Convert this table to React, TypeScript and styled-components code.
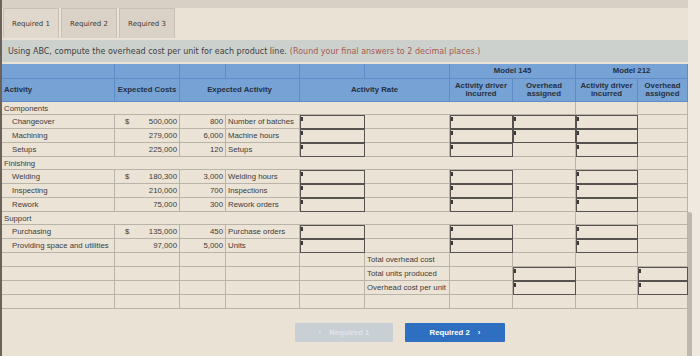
import React from "react";
import styled, { createGlobalStyle, css } from "styled-components";

const GlobalStyle = createGlobalStyle`
  html, body { margin: 0; padding: 0; }
  body { background: #eae2d5; font-family: "Liberation Sans", Arial, sans-serif; }
`;

const COLS = "113px 65px 46px 74px 65px 85px 63px 63px 62px 50px";

const Page = styled.div`
  width: 700px;
  height: 356px;
  display: flex;
  overflow: hidden;
  background: #eae2d5;
`;

const Main = styled.div`
  width: 688px;
  display: flex;
  flex-direction: column;
  border-left: 2px solid #6b6259;
  box-sizing: border-box;
`;

const RightStrip = styled.div`
  width: 12px;
  background: #efe9df;
  display: flex;
  flex-direction: column;
  padding-top: 212px;
  box-sizing: border-box;
`;

const ScrollThumb = styled.div`
  flex: 1;
  width: 5px;
  margin-left: -1px;
  border-radius: 3px 3px 0 0;
  background: #bdb7ae;
`;

const TopStrip = styled.div`
  height: 8px;
  background: #d8d0c4;
`;

const Tabs = styled.div`
  display: flex;
  gap: 2px;
  height: 30px;
  padding-left: 1px;
`;

const Tab = styled.div<{ $active?: boolean }>`
  width: 56px;
  box-sizing: border-box;
  display: flex;
  align-items: center;
  justify-content: center;
  font-family: "DejaVu Sans", Verdana, sans-serif;
  font-size: 7px;
  color: #3d3a36;
  background: ${(p) => (p.$active ? "#e0d8cc" : "#dad2c6")};
  border: 1px solid #c8c0b4;
  border-bottom: none;
`;

const InfoBar = styled.div`
  margin-top: 2px;
  height: 22px;
  display: flex;
  align-items: center;
  padding-left: 6px;
  background: #ccd1cd;
  font-family: "DejaVu Sans", Verdana, sans-serif;
  font-size: 8px;
  color: #3f3f3f;
  white-space: nowrap;
`;

const Hint = styled.span`
  color: #a85a4c;
  margin-left: 3px;
`;

const Table = styled.div`
  margin-top: 2px;
  display: flex;
  flex-direction: column;
`;

const HeadRow = styled.div<{ $h: number }>`
  display: grid;
  grid-template-columns: ${COLS};
  height: ${(p) => p.$h}px;
  background: #76a2d6;
`;

const HeadCell = styled.div<{ $span?: number; $align?: string }>`
  grid-column: span ${(p) => p.$span ?? 1};
  display: flex;
  align-items: center;
  justify-content: ${(p) => p.$align ?? "center"};
  text-align: center;
  padding: 0 2px;
  box-sizing: border-box;
  border-right: 1px solid #5d8cc6;
  border-bottom: 1px solid #5d8cc6;
  font-weight: bold;
  font-size: 7.8px;
  line-height: 8.5px;
  color: #26303f;
  white-space: nowrap;
`;

const HeadLines = styled.span`
  white-space: normal;
`;

const BodyRow = styled.div<{ $h: number }>`
  display: grid;
  grid-template-columns: ${COLS};
  height: ${(p) => p.$h}px;
  background: #ebe3d6;
`;

const Cell = styled.div<{ $span?: number; $align?: string; $pad?: number; $input?: boolean }>`
  grid-column: span ${(p) => p.$span ?? 1};
  position: relative;
  display: flex;
  align-items: center;
  justify-content: ${(p) => p.$align ?? "flex-start"};
  padding: 0 ${(p) => (p.$align === "flex-end" ? 2 : 0)}px 0 ${(p) => p.$pad ?? 3}px;
  box-sizing: border-box;
  border-right: 1px solid #bab3a8;
  border-bottom: 1px solid #bab3a8;
  font-size: 7.8px;
  color: #3b3b3b;
  white-space: nowrap;
  ${(p) =>
    p.$input &&
    css`
      border-right-color: #555250;
      border-bottom-color: #555250;
      box-shadow: inset 1px 1px 0 #555250;
      &::before {
        content: "";
        position: absolute;
        left: 1px;
        top: 2px;
        width: 2px;
        height: 4px;
        background: #3a3a3a;
      }
    `}
`;

const CostCell = styled(Cell)`
  justify-content: space-between;
  padding: 0 2px 0 10px;
`;

const NavRow = styled.div`
  display: flex;
  gap: 12px;
  margin-top: 14px;
  padding-left: 293px;
`;

const NavButton = styled.div<{ $primary?: boolean }>`
  width: ${(p) => (p.$primary ? 100 : 98)}px;
  height: 19px;
  display: flex;
  align-items: center;
  justify-content: center;
  gap: 8px;
  font-size: 7.8px;
  font-weight: bold;
  color: ${(p) => (p.$primary ? "#ffffff" : "#dfe5ea")};
  background: ${(p) => (p.$primary ? "#2f6fc2" : "#c8cfd5")};
  border-radius: 1px;
`;

type DataRow = {
  name: string;
  dollar?: boolean;
  cost: string;
  qty: string;
  unit: string;
  oh145?: boolean;
};

type Group = { title: string; rows: DataRow[] };

const groups: Group[] = [
  {
    title: "Components",
    rows: [
      { name: "Changeover", dollar: true, cost: "500,000", qty: "800", unit: "Number of batches", oh145: true },
      { name: "Machining", cost: "279,000", qty: "6,000", unit: "Machine hours", oh145: true },
      { name: "Setups", cost: "225,000", qty: "120", unit: "Setups" },
    ],
  },
  {
    title: "Finishing",
    rows: [
      { name: "Welding", dollar: true, cost: "180,300", qty: "3,000", unit: "Welding hours" },
      { name: "Inspecting", cost: "210,000", qty: "700", unit: "Inspections" },
      { name: "Rework", cost: "75,000", qty: "300", unit: "Rework orders" },
    ],
  },
  {
    title: "Support",
    rows: [
      { name: "Purchasing", dollar: true, cost: "135,000", qty: "450", unit: "Purchase orders" },
      { name: "Providing space and utilities", cost: "97,000", qty: "5,000", unit: "Units" },
    ],
  },
];

const totals = [
  { label: "Total overhead cost", input: false },
  { label: "Total units produced", input: true },
  { label: "Overhead cost per unit", input: true },
  { label: "", input: false },
];

export default function App() {
  return (
    <>
      <GlobalStyle />
      <Page>
        <Main>
          <TopStrip />
          <Tabs>
            <Tab $active>Required 1</Tab>
            <Tab>Required 2</Tab>
            <Tab>Required 3</Tab>
          </Tabs>
          <InfoBar>
            Using ABC, compute the overhead cost per unit for each product line.
            <Hint>(Round your final answers to 2 decimal places.)</Hint>
          </InfoBar>
          <Table>
            <HeadRow $h={15}>
              <HeadCell />
              <HeadCell />
              <HeadCell />
              <HeadCell />
              <HeadCell />
              <HeadCell />
              <HeadCell $span={2}>Model 145</HeadCell>
              <HeadCell $span={2}>Model 212</HeadCell>
            </HeadRow>
            <HeadRow $h={23}>
              <HeadCell $align="flex-start">Activity</HeadCell>
              <HeadCell>Expected Costs</HeadCell>
              <HeadCell $span={2}>Expected Activity</HeadCell>
              <HeadCell $span={2}>Activity Rate</HeadCell>
              <HeadCell>
                <HeadLines>Activity driver incurred</HeadLines>
              </HeadCell>
              <HeadCell>
                <HeadLines>Overhead assigned</HeadLines>
              </HeadCell>
              <HeadCell>
                <HeadLines>Activity driver incurred</HeadLines>
              </HeadCell>
              <HeadCell $align="flex-end">
                <HeadLines>Overhead assigned</HeadLines>
              </HeadCell>
            </HeadRow>
            {groups.map((g) => (
              <React.Fragment key={g.title}>
                <BodyRow $h={13}>
                  <Cell $span={8} $pad={2}>{g.title}</Cell>
                  <Cell />
                  <Cell />
                </BodyRow>
                {g.rows.map((r) => (
                  <BodyRow $h={14} key={r.name}>
                    <Cell $pad={10}>{r.name}</Cell>
                    <CostCell>
                      <span>{r.dollar ? "$" : ""}</span>
                      <span>{r.cost}</span>
                    </CostCell>
                    <Cell $align="flex-end">{r.qty}</Cell>
                    <Cell $pad={2}>{r.unit}</Cell>
                    <Cell $input />
                    <Cell />
                    <Cell $input />
                    <Cell $input={r.oh145} />
                    <Cell $input />
                    <Cell />
                  </BodyRow>
                ))}
              </React.Fragment>
            ))}
            {totals.map((t, i) => (
              <BodyRow $h={14} key={i}>
                <Cell />
                <Cell />
                <Cell />
                <Cell />
                <Cell />
                <Cell $pad={2}>{t.label}</Cell>
                <Cell />
                <Cell $input={t.input} />
                <Cell />
                <Cell $input={t.input} />
              </BodyRow>
            ))}
          </Table>
          <NavRow>
            <NavButton>
              <span>‹</span>
              <span>Required 1</span>
            </NavButton>
            <NavButton $primary>
              <span>Required 2</span>
              <span>›</span>
            </NavButton>
          </NavRow>
        </Main>
        <RightStrip>
          <ScrollThumb />
        </RightStrip>
      </Page>
    </>
  );
}
